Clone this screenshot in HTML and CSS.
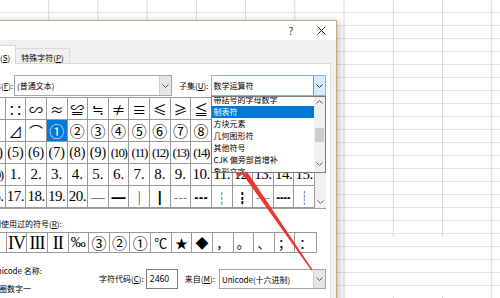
FILE: index.html
```html
<!DOCTYPE html>
<html lang="zh-CN">
<head>
<meta charset="utf-8">
<title>符号</title>
<link rel="stylesheet" href="styles.css">
</head>
<body>
<div class="merged"></div>
<div class="dialog">
  <div class="titlebar">
    <span class="help">?</span>
    <svg class="close" width="9" height="9" viewBox="0 0 9 9"><path d="M0.5 0.5L8.5 8.5M8.5 0.5L0.5 8.5" stroke="#222" stroke-width="1" fill="none"/></svg>
  </div>
  <div class="tabs">
    <div class="tab active">符号(<u>S</u>)</div>
    <div class="tab">特殊字符(<u>P</u>)</div>
  </div>
  <div class="panel">
    <div class="row-font">
      <span class="lbl">字体(<u>F</u>):</span>
      <div class="combo font-combo">
        <span class="val">(普通文本)</span>
        <span class="btn"><svg width="7" height="4" viewBox="0 0 7 4"><path d="M0.5 0.5L3.5 3.5L6.5 0.5" fill="none" stroke="#555"/></svg></span>
      </div>
      <span class="lbl sub-lbl">子集(<u>U</u>):</span>
      <div class="combo sub-combo">
        <span class="val">数学运算符</span>
        <span class="btn"><svg width="7" height="4" viewBox="0 0 7 4"><path d="M0.5 0.5L3.5 3.5L6.5 0.5" fill="none" stroke="#333"/></svg></span>
        <div class="droplist">
          <ul>
            <li>带括号的字母数字</li>
            <li class="sel">制表符</li>
            <li>方块元素</li>
            <li>几何图形符</li>
            <li>其他符号</li>
            <li>CJK 偏旁部首增补</li>
            <li>象形文字</li>
          </ul>
          <div class="dscroll">
            <span class="sarr"><svg width="7" height="4" viewBox="0 0 7 4"><path d="M0.5 3.5L3.5 0.5L6.5 3.5" fill="none" stroke="#606060"/></svg></span>
            <span class="thumb"></span>
            <span class="sarr bottom"><svg width="7" height="4" viewBox="0 0 7 4"><path d="M0.5 0.5L3.5 3.5L6.5 0.5" fill="none" stroke="#606060"/></svg></span>
          </div>
        </div>
      </div>
    </div>

    <div class="grid-wrap">
      <div class="grid">
        <span>∶</span><span class="m">∷</span><span class="m">∽</span><span class="m">≈</span><span class="m">≌</span><span class="m">≒</span><span class="m">≠</span><span class="m">≡</span><span class="m">≤</span><span class="m">≥</span><span class="m">≦</span><span class="m">≧</span><span class="m">≮</span><span class="m">≯</span><span class="m">∞</span><span class="m">∝</span>
        <span class="m">∟</span><span class="m">⊿</span><span class="m">⌒</span><span class="c sel">①</span><span class="c">②</span><span class="c">③</span><span class="c">④</span><span class="c">⑤</span><span class="c">⑥</span><span class="c">⑦</span><span class="c">⑧</span><span class="c">⑨</span><span class="c">⑩</span><span class="c">⑪</span><span class="c">⑫</span><span class="c">⑬</span>
        <span class="p">(4)</span><span class="p">(5)</span><span class="p">(6)</span><span class="p">(7)</span><span class="p">(8)</span><span class="p">(9)</span><span class="p pp">(10)</span><span class="p pp">(11)</span><span class="p pp">(12)</span><span class="p pp">(13)</span><span class="p pp">(14)</span><span class="p pp">(15)</span><span class="p pp">(16)</span><span class="p pp">(17)</span><span class="p pp">(18)</span><span class="p pp">(19)</span>
        <span class="p pp">(20)</span><span>1.</span><span>2.</span><span>3.</span><span>4.</span><span>5.</span><span>6.</span><span>7.</span><span>8.</span><span>9.</span><span class="d">10.</span><span class="d">11.</span><span class="d">12.</span><span class="d">13.</span><span class="d">14.</span><span class="d">15.</span>
        <span class="d">16.</span><span class="d">17.</span><span class="d">18.</span><span class="d">19.</span><span class="d">20.</span><span class="bx">─</span><span class="bx">━</span><span class="bx">│</span><span class="bx">┃</span><span class="bx">┄</span><span class="bx">┅</span><span class="bx">┆</span><span class="bx">┇</span><span class="bx">┈</span><span class="bx">┉</span><span class="bx">┊</span>
      </div>
      <div class="gscroll">
        <span class="sarr"><svg width="7" height="4" viewBox="0 0 7 4"><path d="M0.5 3.5L3.5 0.5L6.5 3.5" fill="none" stroke="#606060"/></svg></span>
        <span class="sarr"><svg width="7" height="4" viewBox="0 0 7 4"><path d="M0.5 0.5L3.5 3.5L6.5 0.5" fill="none" stroke="#606060"/></svg></span>
      </div>
    </div>

    <div class="lbl recent-lbl">近期使用过的符号(<u>R</u>):</div>
    <div class="recent">
      <span class="r">I</span><span class="r">IV</span><span class="r">III</span><span class="r">II</span><span class="pm">‰</span><span class="c">③</span><span class="c">②</span><span class="c">①</span><span class="m">℃</span><span class="m">★</span><span class="m">◆</span><span class="m">，</span><span class="m">。</span><span class="m">、</span><span class="m">；</span><span class="m">：</span>
    </div>

    <div class="bottom">
      <div class="uname">
        <div>Unicode 名称:</div>
        <div class="name">带圈数字一</div>
      </div>
      <span class="lbl code-lbl">字符代码(<u>C</u>):</span>
      <div class="input">2460</div>
      <span class="lbl from-lbl">来自(<u>M</u>):</span>
      <div class="combo from-combo">
        <span class="val">Unicode(十六进制)</span>
        <span class="btn"><svg width="7" height="4" viewBox="0 0 7 4"><path d="M0.5 0.5L3.5 3.5L6.5 0.5" fill="none" stroke="#555"/></svg></span>
      </div>
    </div>
  </div>
</div>
<svg class="arrow" width="500" height="298" viewBox="0 0 500 298">
  <polygon points="231,153 252.1,167.6 246.8,171.3 312.6,269.8 311.4,270.5 242.6,174.3 237.3,177.8" fill="#e8382f"/>
</svg>
</body>
</html>
```

FILE: styles.css
```css
* { box-sizing: border-box; }
html, body { margin: 0; }
body {
  width: 500px;
  height: 298px;
  overflow: hidden;
  position: relative;
  font-family: "Noto Sans CJK SC", "Noto Sans", sans-serif;
  color: #000;
  background:
    linear-gradient(to right, transparent 48px, #d7d7d7 48px, #d7d7d7 49px, transparent 49px) 0 0 / 49.22px 100% repeat-x,
    linear-gradient(to bottom, transparent 12px, #e3e3e3 12px, #e3e3e3 13px, transparent 13px) 0 0 / 100% 13px repeat-y,
    #fff;
}

/* merged cells in the sheet behind the dialog */
.merged {
  position: absolute;
  left: 360px;
  top: 237px;
  width: 120px;
  height: 59px;
  background:
    linear-gradient(to bottom, transparent 12px, #e3e3e3 12px, #e3e3e3 13px, transparent 13px) 0 -3px / 100% 13px repeat-y,
    #fff;
}

.dialog {
  position: absolute;
  left: -30px;
  top: 20px;
  width: 367px;
  height: 290px;
  border: 1px solid #c8a87c;
  background: #f0f0f0;
  box-shadow: 2px 2px 8px rgba(0, 0, 0, 0.25);
  display: flex;
  flex-direction: column;
}

.titlebar {
  flex: none;
  height: 19px;
  background: #fff;
  display: flex;
  align-items: center;
  justify-content: flex-end;
  padding-right: 10px;
}
.help {
  font: 10px/1 "Noto Sans", sans-serif;
  color: #333;
  margin-right: 24px;
}
.close { display: block; }

.tabs {
  flex: none;
  height: 23px;
  display: flex;
  align-items: flex-end;
  padding-left: 8px;
}
.tab {
  height: 15px;
  padding: 3px 5px 0;
  border: 1px solid #d9d9d9;
  border-bottom: 0;
  margin-left: -1px;
  background: #f0f0f0;
  font-size: 8px;
  line-height: 11px;
  white-space: nowrap;
}
.tab.active {
  height: 19px;
  padding-top: 6px;
  background: #fff;
  margin-bottom: -1px;
  position: relative;
  z-index: 1;
}

.panel {
  flex: 1;
  margin: 0 5px;
  background: #fff;
  border: 1px solid #d9d9d9;
  padding: 11px 4px 0 8px;
  font-size: 8px;
}

.lbl {
  font-size: 8px;
  line-height: 11px;
  white-space: nowrap;
}

.row-font {
  display: flex;
  align-items: center;
  height: 21px;
}

.combo {
  height: 21px;
  border: 1px solid #a6a6a6;
  background: #fff;
  display: flex;
  align-items: center;
  position: relative;
}
.combo .val {
  flex: 1;
  padding-left: 2px;
  font-size: 8px;
  white-space: nowrap;
  overflow: hidden;
}
.combo .btn {
  width: 12px;
  align-self: stretch;
  background: #e6e6e6;
  border-left: 1px solid #cfcfcf;
  display: flex;
  align-items: center;
  justify-content: center;
}
.font-combo { width: 158px; margin-left: 1px; }
.sub-lbl { margin-left: 7px; }
.sub-combo { flex: 1; margin-left: 2px; border-color: #7eb4ea; }
.sub-combo .btn { background: #d7ebfc; border-left: 1px solid #569de5; }

.droplist {
  position: absolute;
  left: -1px;
  top: 20px;
  width: calc(100% + 2px);
  height: 77px;
  border: 1px solid #7a7a7a;
  background: #fff;
  display: flex;
  overflow: hidden;
  z-index: 2;
}
.droplist ul {
  flex: 1;
  list-style: none;
  margin: -3px 0 0;
  padding: 0;
}
.droplist li {
  height: 12px;
  line-height: 12px;
  padding-left: 2px;
  font-size: 8px;
  white-space: nowrap;
}
.droplist li.sel { background: #0078d7; color: #fff; }

.dscroll {
  width: 11px;
  background: #f0f0f0;
  display: flex;
  flex-direction: column;
  align-items: center;
}
.sarr {
  height: 10px;
  display: flex;
  align-items: center;
  justify-content: center;
}
.sarr svg { display: block; }
.thumb {
  width: 9px;
  height: 14px;
  margin-top: 21px;
  background: #cdcdcd;
}
.sarr.bottom { margin-top: auto; }

.grid-wrap {
  display: flex;
  margin-top: 1px;
  height: 112px;
  border-top: 1px solid #999;
  border-bottom: 1px solid #a0a0a0;
}
.grid {
  display: grid;
  grid-template-columns: repeat(16, 20.625px);
  grid-auto-rows: 22px;
}
.grid span, .recent span {
  border-right: 1px solid #999;
  display: flex;
  align-items: center;
  justify-content: center;
  overflow: hidden;
  white-space: nowrap;
  font: 15px/1 "Liberation Serif", "Noto Sans CJK SC", serif;
}
.grid span { border-bottom: 1px solid #999; }
.grid .m { font: 14px/1 "Noto Sans CJK SC", sans-serif; }
.grid .c, .recent .c { font: 15px/1 "Noto Sans CJK SC", sans-serif; }
.grid .p { font-size: 14px; }
.grid .pp { font-size: 13px; letter-spacing: -1.5px; }
.grid .d { letter-spacing: -0.5px; }
.grid .bx { font: 14px/1 "Noto Sans CJK SC", sans-serif; }
.grid .sel { background: #0078d7; color: #fff; }

.gscroll {
  width: 11px;
  background: #f0f0f0;
  display: flex;
  flex-direction: column;
  justify-content: space-between;
  align-items: center;
  padding: 1px 0;
}

.recent-lbl { margin-top: 9px; }

.recent {
  margin-top: 3px;
  display: grid;
  grid-template-columns: repeat(16, 20.625px);
  height: 21px;
  width: 332px;
  border: 1px solid #999;
}
.recent span:last-child { border-right: 0; }
.recent .r { font-size: 18px; letter-spacing: -1px; }
.recent .pm { font-size: 15px; }
.recent .m { font: 13px/1 "Noto Sans CJK SC", sans-serif; }

.bottom {
  display: flex;
  align-items: flex-start;
  margin-top: 12px;
}
.uname {
  width: 114px;
  padding-left: 6px;
  font-size: 8px;
  line-height: 11px;
  white-space: nowrap;
}
.uname .name { margin-top: 7px; }
.code-lbl { margin-top: 4px; line-height: 20px; }
.input {
  width: 32px;
  height: 20px;
  margin: 4px 0 0 2px;
  border: 1px solid #7a7a7a;
  background: #fff;
  padding-left: 3px;
  font: 8.5px/18px "Noto Sans", sans-serif;
}
.from-lbl { margin: 4px 0 0 7px; line-height: 20px; }
.from-combo { flex: 1; height: 20px; margin: 4px 0 0 4px; }

.arrow {
  position: absolute;
  left: 0;
  top: 0;
  pointer-events: none;
}
```
